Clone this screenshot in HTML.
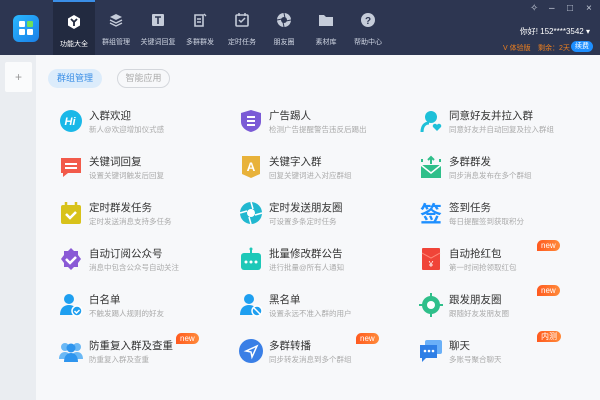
<!DOCTYPE html><html><head><meta charset="utf-8"><style>
*{margin:0;padding:0;box-sizing:border-box}
body{width:600px;height:400px;overflow:hidden;background:#f7f8fa;font-family:"Liberation Sans","Noto Sans CJK SC",sans-serif;position:relative}
.hd{position:absolute;left:0;top:0;width:600px;height:55px;background:#2d3651}
.tab{position:absolute;top:0;width:42px;height:55px;text-align:center;color:#cfd5e2;font-size:7px}
.tab.on{background:#222a40;border-top:2px solid #3a8ee6}
.tab .ic{position:absolute;left:13px;top:12px;width:16px;height:16px}
.tab span{position:absolute;left:0;right:0;top:37px}
.side{position:absolute;left:0;top:55px;width:36px;height:345px;background:#eaedf1}
.it{position:absolute;width:170px;height:36px}
.it .i{position:absolute;left:0;top:2px;width:24px;height:24px}
.it b{position:absolute;left:30px;top:1px;font-weight:normal;font-size:10.5px;color:#333;white-space:nowrap}
.it i{position:absolute;left:30px;top:17px;font-style:normal;font-size:7.5px;color:#aaa;white-space:nowrap}
.bd{position:absolute;height:11px;padding:0 4px;border-radius:6px 6px 6px 0;background:linear-gradient(90deg,#ff5a1f,#ff8a3a);color:#fff;font-size:8px;line-height:11px}
.wc{position:absolute;top:3px;color:#c5ccd9;font-size:10px}
</style></head><body>
<div class="hd">
<div style="position:absolute;left:13px;top:15px;width:26px;height:27px;border-radius:6px;background:linear-gradient(135deg,#2ab8ff,#1a7fe8)">
<div style="position:absolute;left:6px;top:6px;width:6px;height:6px;background:#fff;border-radius:1px"></div>
<div style="position:absolute;left:14px;top:6px;width:6px;height:6px;background:#6fe05a;border-radius:1px"></div>
<div style="position:absolute;left:6px;top:14px;width:6px;height:6px;background:#fff;border-radius:1px"></div>
<div style="position:absolute;left:14px;top:14px;width:6px;height:6px;background:#fff;border-radius:1px"></div></div>
<div class="tab on" style="left:53px"><svg class="ic" viewBox="0 0 16 16"><path d="M8 1l6 3.5v7L8 15 2 11.5v-7z" fill="#fff"/><path d="M5 5l3 3 3-3M8 8v4" stroke="#222a40" stroke-width="1.8" fill="none"/></svg><span style="color:#fff">功能大全</span></div>
<div class="tab" style="left:95px"><svg class="ic" viewBox="0 0 16 16"><path d="M8 2l6 3-6 3-6-3z" fill="#c5ccd9"/><path d="M2 8l6 3 6-3M2 11l6 3 6-3" stroke="#c5ccd9" stroke-width="1.4" fill="none"/></svg><span>群组管理</span></div>
<div class="tab" style="left:137px"><svg class="ic" viewBox="0 0 16 16"><rect x="2" y="2" width="12" height="12" rx="1" fill="#c5ccd9"/><path d="M5 5h6M8 5v7" stroke="#2d3651" stroke-width="1.6"/></svg><span>关键词回复</span></div>
<div class="tab" style="left:179px"><svg class="ic" viewBox="0 0 16 16"><path d="M3 3h8v11H3z" fill="none" stroke="#c5ccd9" stroke-width="1.6"/><path d="M5 7h4M5 10h4M12 2l2 2" stroke="#c5ccd9" stroke-width="1.4"/></svg><span>多群群发</span></div>
<div class="tab" style="left:221px"><svg class="ic" viewBox="0 0 16 16"><rect x="2" y="3" width="12" height="11" rx="1" fill="none" stroke="#c5ccd9" stroke-width="1.6"/><path d="M5 8l2 2 4-4M5 1v3M11 1v3" stroke="#c5ccd9" stroke-width="1.5" fill="none"/></svg><span>定时任务</span></div>
<div class="tab" style="left:263px"><svg class="ic" viewBox="0 0 16 16"><circle cx="8" cy="8" r="7" fill="#c5ccd9"/><circle cx="8" cy="8" r="3" fill="#2d3651"/><path d="M8 1l1 5M15 8l-5 1M8 15l-1-5M1 8l5-1" stroke="#2d3651" stroke-width="1"/></svg><span>朋友圈</span></div>
<div class="tab" style="left:305px"><svg class="ic" viewBox="0 0 16 16"><path d="M1 3h5l2 2h7v9H1z" fill="#c5ccd9"/></svg><span>素材库</span></div>
<div class="tab" style="left:347px"><svg class="ic" viewBox="0 0 16 16"><circle cx="8" cy="8" r="7" fill="#c5ccd9"/><text x="8" y="12" font-size="10" text-anchor="middle" fill="#2d3651" font-weight="bold" font-family="Liberation Sans">?</text></svg><span>帮助中心</span></div>
<div class="wc" style="left:530px">✧</div><div class="wc" style="left:549px">–</div><div class="wc" style="left:567px">□</div><div class="wc" style="left:586px">×</div>
<div style="position:absolute;right:10px;top:26px;color:#fff;font-size:8px">你好! 152****3542 ▾</div>
<div style="position:absolute;left:503px;top:43px;color:#f0801e;font-size:7px">V 体验版</div>
<div style="position:absolute;left:538px;top:43px;color:#f0801e;font-size:7px">剩余：2天</div>
<div style="position:absolute;left:571px;top:41px;width:22px;height:11px;border-radius:6px;background:#1e8fff;color:#fff;font-size:7px;text-align:center;line-height:11px">续费</div>
</div>
<div class="side"><div style="position:absolute;left:5px;top:7px;width:27px;height:30px;background:#fafbfc;border-radius:2px;color:#999;font-size:12px;text-align:center;line-height:30px">+</div></div>
<div style="position:absolute;left:48px;top:69px;width:54px;height:19px;border-radius:10px;background:#dcecfb;color:#3a8ee6;font-size:9px;text-align:center;line-height:19px">群组管理</div>
<div style="position:absolute;left:117px;top:69px;width:53px;height:19px;border-radius:10px;border:1px solid #d4d7dc;color:#aaa;font-size:9px;text-align:center;line-height:17px">智能应用</div>

<div class="it" style="left:59px;top:107px"><svg class="i" viewBox="0 0 24 24"><circle cx="12" cy="12" r="11" fill="#1ab8e8"/><text x="11" y="16" font-size="11" font-style="italic" font-weight="bold" fill="#fff" text-anchor="middle" font-family="Liberation Sans">Hi</text></svg><b>入群欢迎</b><i>新人@欢迎增加仪式感</i></div>
<div class="it" style="left:239px;top:107px"><svg class="i" viewBox="0 0 24 24"><path d="M12 1l10 3v9c0 5-5 9-10 10C7 22 2 18 2 13V4z" fill="#7b5bd6"/><path d="M8 8h8M8 12h8M8 16h8" stroke="#fff" stroke-width="2"/></svg><b>广告踢人</b><i>检测广告提醒警告违反后踢出</i></div>
<div class="it" style="left:419px;top:107px"><svg class="i" viewBox="0 0 24 24"><circle cx="12" cy="8" r="6" fill="#1ec0d8"/><path d="M3 23c0-6 3-9 7-9" stroke="#1ec0d8" stroke-width="3" fill="none"/><path d="M18 22l-4-4a2 2 0 014-2 2 2 0 014 2z" fill="#1ec0d8"/></svg><b>同意好友并拉入群</b><i>同意好友并自动回复及拉入群组</i></div>

<div class="it" style="left:59px;top:153px"><svg class="i" viewBox="0 0 24 24"><path d="M2 3h20v15H9l-5 4v-4H2z" fill="#f25a4a"/><path d="M6 9h12M6 13h12" stroke="#fff" stroke-width="2"/></svg><b>关键词回复</b><i>设置关键词触发后回复</i></div>
<div class="it" style="left:239px;top:153px"><svg class="i" viewBox="0 0 24 24"><path d="M3 1h18v18l-9 4-9-4z" fill="#e8b23a"/><text x="12" y="16" font-size="12" font-weight="bold" fill="#fff" text-anchor="middle" font-family="Liberation Sans">A</text></svg><b>关键字入群</b><i>回复关键词进入对应群组</i></div>
<div class="it" style="left:419px;top:153px"><svg class="i" viewBox="0 0 24 24"><path d="M2 10h20v13H2z" fill="#2fbf8a"/><path d="M2 10l10 8 10-8" stroke="#fff" stroke-width="1.5" fill="none"/><path d="M12 9V2M9 5l3-3 3 3M3 4v3M21 4v3" stroke="#2fbf8a" stroke-width="2" fill="none"/></svg><b>多群群发</b><i>同步消息发布在多个群组</i></div>

<div class="it" style="left:59px;top:199px"><svg class="i" viewBox="0 0 24 24"><rect x="2" y="4" width="20" height="19" rx="2" fill="#d8c21a"/><path d="M7 1v6M17 1v6" stroke="#d8c21a" stroke-width="2.5"/><path d="M7 13l4 4 6-6" stroke="#fff" stroke-width="2.5" fill="none"/></svg><b>定时群发任务</b><i>定时发送消息支持多任务</i></div>
<div class="it" style="left:239px;top:199px"><svg class="i" viewBox="0 0 24 24"><circle cx="12" cy="12" r="11" fill="#21b8d0"/><circle cx="12" cy="12" r="4" fill="#fff"/><path d="M12 1l2 7M23 12l-7 2M12 23l-2-7M1 12l7-2" stroke="#fff" stroke-width="1.5"/></svg><b>定时发送朋友圈</b><i>可设置多条定时任务</i></div>
<div class="it" style="left:419px;top:199px"><svg class="i" viewBox="0 0 24 24"><text x="12" y="21" font-size="22" font-weight="bold" fill="#1e8fff" text-anchor="middle" font-family="Noto Sans CJK SC">签</text></svg><b>签到任务</b><i>每日提醒签到获取积分</i></div>

<div class="it" style="left:59px;top:245px"><svg class="i" viewBox="0 0 24 24"><path d="M12 1l3 3h4v4l3 4-3 4v4h-4l-3 3-3-3H5v-4l-3-4 3-4V4h4z" fill="#8a5ad6"/><path d="M7 12l4 4 6-6" stroke="#fff" stroke-width="2.5" fill="none"/></svg><b>自动订阅公众号</b><i>消息中包含公众号自动关注</i></div>
<div class="it" style="left:239px;top:245px"><svg class="i" viewBox="0 0 24 24"><rect x="2" y="6" width="20" height="17" rx="3" fill="#1ec8b8"/><path d="M12 6V2" stroke="#1ec8b8" stroke-width="2"/><circle cx="12" cy="2" r="1.5" fill="#1ec8b8"/><circle cx="7" cy="15" r="1.5" fill="#fff"/><circle cx="12" cy="15" r="1.5" fill="#fff"/><circle cx="17" cy="15" r="1.5" fill="#fff"/></svg><b>批量修改群公告</b><i>进行批量@所有人通知</i></div>
<div class="it" style="left:419px;top:245px"><svg class="i" viewBox="0 0 24 24"><rect x="3" y="1" width="18" height="22" rx="1" fill="#f04438"/><path d="M3 6l9 5 9-5" stroke="#ff8a7a" stroke-width="1" fill="none"/><text x="12" y="20" font-size="8" fill="#fff" text-anchor="middle" font-family="Liberation Sans">¥</text></svg><b>自动抢红包</b><i>第一时间抢领取红包</i></div>

<div class="it" style="left:59px;top:291px"><svg class="i" viewBox="0 0 24 24"><circle cx="10" cy="6" r="5" fill="#1e9ff0"/><path d="M1 22c0-7 4-10 9-10s9 3 9 10z" fill="#1e9ff0"/><circle cx="18" cy="18" r="5" fill="#1e9ff0" stroke="#fff" stroke-width="1.5"/><path d="M15.5 18l2 2 3-3" stroke="#fff" stroke-width="1.5" fill="none"/></svg><b>白名单</b><i>不触发踢人规则的好友</i></div>
<div class="it" style="left:239px;top:291px"><svg class="i" viewBox="0 0 24 24"><circle cx="10" cy="6" r="5" fill="#1e9ff0"/><path d="M1 22c0-7 4-10 9-10s9 3 9 10z" fill="#1e9ff0"/><circle cx="18" cy="18" r="5" fill="#1e9ff0" stroke="#fff" stroke-width="1.5"/><path d="M15 15l6 6" stroke="#fff" stroke-width="1.5"/></svg><b>黑名单</b><i>设置永远不准入群的用户</i></div>
<div class="it" style="left:419px;top:291px"><svg class="i" viewBox="0 0 24 24"><circle cx="12" cy="12" r="9" fill="#2fbf8a"/><circle cx="12" cy="12" r="4" fill="#fff"/><path d="M12 0v4M12 20v4M0 12h4M20 12h4" stroke="#2fbf8a" stroke-width="2"/></svg><b>跟发朋友圈</b><i>跟随好友发朋友圈</i></div>

<div class="it" style="left:59px;top:337px"><svg class="i" viewBox="0 0 24 24"><circle cx="6" cy="8" r="4" fill="#6ab8f5"/><circle cx="18" cy="8" r="4" fill="#6ab8f5"/><path d="M0 20c0-5 3-7 6-7s6 2 6 7zM12 20c0-5 3-7 6-7s6 2 6 7z" fill="#6ab8f5"/><circle cx="12" cy="9" r="4.5" fill="#2e95ee"/><path d="M5 23c0-6 3-9 7-9s7 3 7 9z" fill="#2e95ee"/></svg><b>防重复入群及查重</b><i>防重复入群及查重</i></div>
<div class="it" style="left:239px;top:337px"><svg class="i" viewBox="0 0 24 24"><circle cx="12" cy="12" r="12" fill="#3a7fe6"/><path d="M7 12l11-5-5 11-1-5z" fill="none" stroke="#fff" stroke-width="1.5"/></svg><b>多群转播</b><i>同步转发消息到多个群组</i></div>
<div class="it" style="left:419px;top:337px"><svg class="i" viewBox="0 0 24 24"><rect x="6" y="1" width="17" height="14" rx="2" fill="#6ab0f8"/><path d="M1 6h17v13H7l-4 4v-4H1z" fill="#2e7fe6"/><circle cx="6" cy="12" r="1.3" fill="#fff"/><circle cx="10" cy="12" r="1.3" fill="#fff"/><circle cx="14" cy="12" r="1.3" fill="#fff"/></svg><b>聊天</b><i>多账号聚合聊天</i></div>

<div class="bd" style="left:537px;top:240px">new</div>
<div class="bd" style="left:537px;top:285px">new</div>
<div class="bd" style="left:537px;top:331px">内测</div>
<div class="bd" style="left:356px;top:333px">new</div>
<div class="bd" style="left:176px;top:333px">new</div>
</body></html>
